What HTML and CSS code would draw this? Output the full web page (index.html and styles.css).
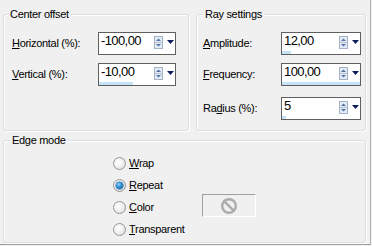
FILE: index.html
```html
<!DOCTYPE html>
<html>
<head>
<meta charset="utf-8">
<link rel="stylesheet" href="styles.css">
</head>
<body>
<div class="dialog">
  <div class="top-row">
    <section class="group group-center">
      <div class="group-title">Center offset</div>
      <div class="fields fields-center">
        <div class="field">
          <span class="label label-center"><u>H</u>orizontal (%):</span>
          <div class="spin-input si-center">
            <div class="si-main">
              <span class="si-value">-100,00</span>
              <svg class="si-spin" width="9" height="13" viewBox="0 0 9 13"><rect x="0.5" y="0.5" width="8" height="12" fill="#e4ebf4" stroke="#a3b2c6"/><line x1="1" y1="6.5" x2="8" y2="6.5" stroke="#b8c4d4"/><path d="M2 5 L4.5 2.5 L7 5Z" fill="#5473a6"/><path d="M2 8 L4.5 10.5 L7 8Z" fill="#5473a6"/></svg>
              <svg class="si-drop" width="7" height="4" viewBox="0 0 7 4"><path d="M0 0H7L3.5 4Z" fill="#0b1e5b"/></svg>
            </div>
            <div class="si-track"><div class="si-bar" style="width:0%"></div></div>
          </div>
        </div>
        <div class="field">
          <span class="label label-center"><u>V</u>ertical (%):</span>
          <div class="spin-input si-center">
            <div class="si-main">
              <span class="si-value">-10,00</span>
              <svg class="si-spin" width="9" height="13" viewBox="0 0 9 13"><rect x="0.5" y="0.5" width="8" height="12" fill="#e4ebf4" stroke="#a3b2c6"/><line x1="1" y1="6.5" x2="8" y2="6.5" stroke="#b8c4d4"/><path d="M2 5 L4.5 2.5 L7 5Z" fill="#5473a6"/><path d="M2 8 L4.5 10.5 L7 8Z" fill="#5473a6"/></svg>
              <svg class="si-drop" width="7" height="4" viewBox="0 0 7 4"><path d="M0 0H7L3.5 4Z" fill="#0b1e5b"/></svg>
            </div>
            <div class="si-track"><div class="si-bar" style="width:45%"></div></div>
          </div>
        </div>
      </div>
    </section>
    <section class="group group-ray">
      <div class="group-title title-ray">Ray settings</div>
      <div class="fields fields-ray">
        <div class="field">
          <span class="label label-ray"><u>A</u>mplitude:</span>
          <div class="spin-input si-ray">
            <div class="si-main">
              <span class="si-value">12,00</span>
              <svg class="si-spin" width="9" height="13" viewBox="0 0 9 13"><rect x="0.5" y="0.5" width="8" height="12" fill="#e4ebf4" stroke="#a3b2c6"/><line x1="1" y1="6.5" x2="8" y2="6.5" stroke="#b8c4d4"/><path d="M2 5 L4.5 2.5 L7 5Z" fill="#5473a6"/><path d="M2 8 L4.5 10.5 L7 8Z" fill="#5473a6"/></svg>
              <svg class="si-drop" width="7" height="4" viewBox="0 0 7 4"><path d="M0 0H7L3.5 4Z" fill="#0b1e5b"/></svg>
            </div>
            <div class="si-track"><div class="si-bar" style="width:12%"></div></div>
          </div>
        </div>
        <div class="field">
          <span class="label label-ray"><u>F</u>requency:</span>
          <div class="spin-input si-ray">
            <div class="si-main">
              <span class="si-value">100,00</span>
              <svg class="si-spin" width="9" height="13" viewBox="0 0 9 13"><rect x="0.5" y="0.5" width="8" height="12" fill="#e4ebf4" stroke="#a3b2c6"/><line x1="1" y1="6.5" x2="8" y2="6.5" stroke="#b8c4d4"/><path d="M2 5 L4.5 2.5 L7 5Z" fill="#5473a6"/><path d="M2 8 L4.5 10.5 L7 8Z" fill="#5473a6"/></svg>
              <svg class="si-drop" width="7" height="4" viewBox="0 0 7 4"><path d="M0 0H7L3.5 4Z" fill="#0b1e5b"/></svg>
            </div>
            <div class="si-track"><div class="si-bar" style="width:100%"></div></div>
          </div>
        </div>
        <div class="field field-radius">
          <span class="label label-ray">Ra<u>d</u>ius (%):</span>
          <div class="spin-input si-ray">
            <div class="si-main">
              <span class="si-value">5</span>
              <svg class="si-spin" width="9" height="13" viewBox="0 0 9 13"><rect x="0.5" y="0.5" width="8" height="12" fill="#e4ebf4" stroke="#a3b2c6"/><line x1="1" y1="6.5" x2="8" y2="6.5" stroke="#b8c4d4"/><path d="M2 5 L4.5 2.5 L7 5Z" fill="#5473a6"/><path d="M2 8 L4.5 10.5 L7 8Z" fill="#5473a6"/></svg>
              <svg class="si-drop" width="7" height="4" viewBox="0 0 7 4"><path d="M0 0H7L3.5 4Z" fill="#0b1e5b"/></svg>
            </div>
            <div class="si-track"><div class="si-bar" style="width:5%"></div></div>
          </div>
        </div>
      </div>
    </section>
  </div>
  <section class="group group-edge">
    <div class="group-title title-edge">Edge mode</div>
    <div class="radios">
      <div class="radio-row"><span class="radio"></span><span class="radio-text"><u>W</u>rap</span></div>
      <div class="radio-row"><span class="radio checked"></span><span class="radio-text"><u>R</u>epeat</span></div>
      <div class="radio-row"><span class="radio"></span><span class="radio-text radio-text-fixed"><u>C</u>olor</span>
        <span class="swatch"><svg width="18" height="18" viewBox="0 0 18 18"><circle cx="9" cy="9" r="6.8" fill="none" stroke="#ababab" stroke-width="2.4"/><line x1="4.4" y1="4.4" x2="13.6" y2="13.6" stroke="#ababab" stroke-width="2.4"/></svg></span>
      </div>
      <div class="radio-row"><span class="radio"></span><span class="radio-text"><u>T</u>ransparent</span></div>
    </div>
  </section>
</div>
</body>
</html>
```

FILE: styles.css
```css
html, body {
  margin: 0;
  background: #f0f0f0;
}
body {
  width: 372px;
  height: 246px;
  overflow: hidden;
  font-family: "Liberation Sans", Arial, sans-serif;
  font-size: 11px;
  line-height: 13px;
  letter-spacing: -0.3px;
  color: #000;
}
u {
  text-decoration: underline;
  text-underline-offset: 1px;
}
.dialog {
  box-sizing: border-box;
  width: 371px;
  height: 245px;
  border-right: 1px solid #b4b4b4;
  border-bottom: 1px solid #a0a0a0;
  padding: 14px 0 0 3px;
}
.top-row {
  display: flex;
  gap: 7px;
}
.group {
  box-sizing: border-box;
  border: 1px solid #d5dfe5;
  border-radius: 3px;
  box-shadow: inset 1px 1px 0 #fff, 1px 1px 0 #fff;
}
.group-center {
  width: 186px;
  height: 117px;
}
.group-ray {
  width: 170px;
  height: 117px;
}
.group-edge {
  width: 363px;
  height: 103px;
  margin-top: 9px;
}
.group-title {
  width: max-content;
  margin: -7px 0 0 4px;
  padding: 0 2px;
  background: #f0f0f0;
  line-height: 13px;
}
.title-ray,
.title-edge {
  margin-left: 6px;
}
.fields {
  display: flex;
  flex-direction: column;
  gap: 8px;
  padding-top: 11px;
}
.fields-center {
  padding-left: 8px;
}
.fields-ray {
  padding-left: 6px;
}
.field {
  display: flex;
  align-items: center;
}
.field-radius {
  margin-top: 3px;
}
.label {
  flex: none;
}
.label-center {
  width: 86px;
}
.label-ray {
  width: 78px;
}
.spin-input {
  box-sizing: border-box;
  height: 23px;
  border: 1px solid #5f5f5f;
  background: #fff;
  display: flex;
  flex-direction: column;
}
.si-center {
  width: 78px;
}
.si-ray {
  width: 80px;
}
.si-main {
  flex: 1;
  display: flex;
  align-items: center;
  padding-right: 1px;
}
.si-value {
  flex: 1;
  align-self: flex-start;
  padding-left: 2px;
  font-size: 13px;
  line-height: 15px;
  letter-spacing: -0.6px;
}
.si-spin {
  display: block;
  flex: none;
  margin-right: 4px;
}
.si-drop {
  display: block;
  flex: none;
}
.si-track {
  height: 3px;
}
.si-bar {
  height: 3px;
  background: #c4e3f6;
}
.radios {
  padding: 5px 0 0 109px;
}
.radio-row {
  display: flex;
  align-items: center;
  height: 22px;
}
.radio {
  box-sizing: border-box;
  width: 13px;
  height: 13px;
  margin-right: 3px;
  border-radius: 50%;
  border: 1px solid #979797;
  background: radial-gradient(circle at 40% 40%, #ffffff 0%, #f1f1f1 45%, #d3d3d3 100%);
  display: flex;
  align-items: center;
  justify-content: center;
}
.radio.checked::after {
  content: "";
  width: 7px;
  height: 7px;
  border-radius: 50%;
  background: radial-gradient(circle at 40% 35%, #8fd3fa 0%, #2a8bd0 45%, #0c4d8a 100%);
  box-shadow: 0 0 0 0.5px #1b5d98;
}
.radio-text-fixed {
  width: 73px;
}
.swatch {
  box-sizing: border-box;
  width: 54px;
  height: 23px;
  align-self: flex-start;
  margin-top: -2px;
  border-top: 1px solid #a0a0a0;
  border-left: 1px solid #a0a0a0;
  border-right: 1px solid #fff;
  border-bottom: 1px solid #fff;
  display: flex;
  align-items: center;
  justify-content: center;
}
.swatch svg {
  display: block;
}
```
